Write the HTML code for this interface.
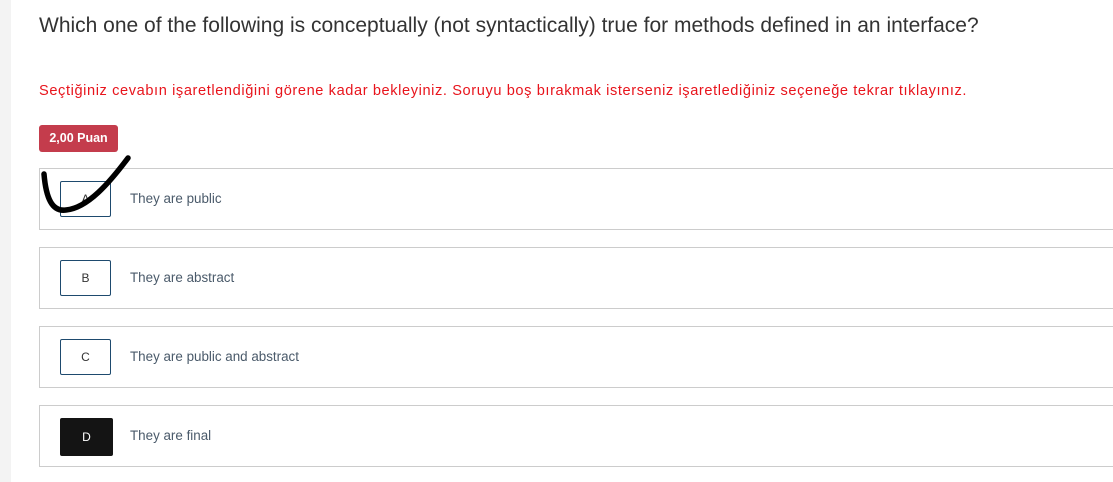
<!DOCTYPE html>
<html><head><style>
body{margin:0;width:1113px;height:482px;background:#fff;font-family:"Liberation Sans",sans-serif;position:relative;overflow:hidden}
.strip{position:absolute;left:0;top:0;width:11px;height:482px;background:#f3f3f3}
h1{position:absolute;left:39px;top:14px;margin:0;font-size:21px;font-weight:normal;color:#333;white-space:nowrap}
.warn{position:absolute;left:39px;top:83px;font-size:14.6px;color:#e8141c;letter-spacing:0.6px;white-space:nowrap}
.badge{position:absolute;left:39px;top:125px;width:79px;height:27px;background:#c43c4c;color:#fff;border-radius:3px;font-size:12.5px;font-weight:bold;line-height:27px;text-align:center}
.opt{position:absolute;left:39px;width:1090px;height:60px;border:1px solid #ccc;box-sizing:content-box}
.l{position:absolute;left:20px;top:12px;width:49px;height:34px;border:1px solid #1e4a6e;border-radius:2px;font-size:12px;color:#333;text-align:center;line-height:34px}
.l.d{background:#141414;color:#fff;border-color:#141414;width:51px;height:36px;top:12px;line-height:36px}
.t{position:absolute;left:90px;top:22px;font-size:13.4px;color:#4a5a6a}
</style></head><body>
<div class="strip"></div>
<h1>Which one of the following is conceptually (not syntactically) true for methods defined in an interface?</h1>
<div class="warn">Seçtiğiniz cevabın işaretlendiğini görene kadar bekleyiniz. Soruyu boş bırakmak isterseniz işaretlediğiniz seçeneğe tekrar tıklayınız.</div>
<div class="badge">2,00 Puan</div>
<div class="opt" style="top:168px"><div class="l">A</div><div class="t">They are public</div></div>
<div class="opt" style="top:247px"><div class="l">B</div><div class="t">They are abstract</div></div>
<div class="opt" style="top:326px"><div class="l">C</div><div class="t">They are public and abstract</div></div>
<div class="opt" style="top:405px"><div class="l d">D</div><div class="t">They are final</div></div>
<svg style="position:absolute;left:0;top:0" width="200" height="230"><path d="M44 174 C46 198 52 212 66 210 C88 208 110 182 128 158" fill="none" stroke="#000" stroke-width="5.5" stroke-linecap="round"/></svg>
</body></html>
